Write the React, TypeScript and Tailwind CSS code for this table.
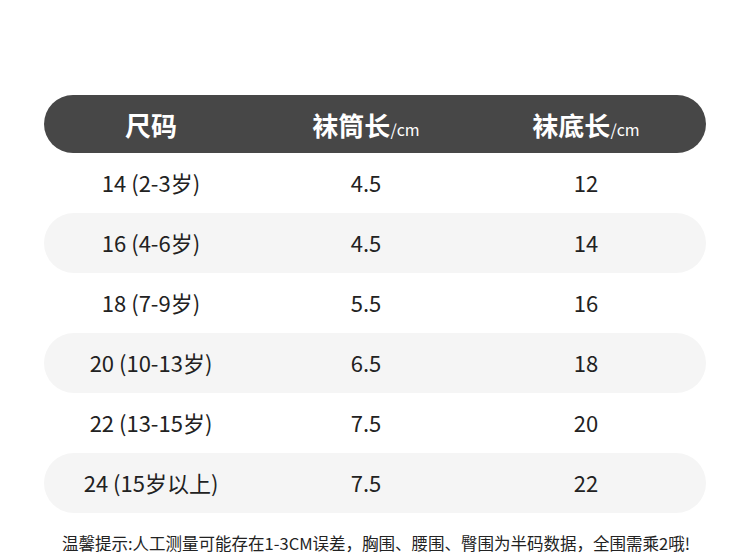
const rows = [
  { size: '14 (2-3岁)', tube: '4.5', sole: '12' },
  { size: '16 (4-6岁)', tube: '4.5', sole: '14' },
  { size: '18 (7-9岁)', tube: '5.5', sole: '16' },
  { size: '20 (10-13岁)', tube: '6.5', sole: '18' },
  { size: '22 (13-15岁)', tube: '7.5', sole: '20' },
  { size: '24 (15岁以上)', tube: '7.5', sole: '22' },
];

const App = () => {
  return (
    <div
      className="w-[750px] h-[553px] overflow-hidden bg-white pt-[95px]"
      style={{ fontFamily: '"Noto Sans CJK SC", "Noto Sans", sans-serif' }}
    >
      <div className="mx-[44px]">
        <div className="grid grid-cols-[214px_216px_1fr] pr-[8px] h-[58px] items-center rounded-full bg-[#474747] text-white">
          <div className="text-center text-[26px] font-bold">尺码</div>
          <div className="text-center text-[26px] font-bold">
            袜筒长<span className="text-[16px] font-normal">/cm</span>
          </div>
          <div className="text-center text-[26px] font-bold">
            袜底长<span className="text-[16px] font-normal">/cm</span>
          </div>
        </div>
        {rows.map((row, i) => (
          <div
            key={row.size}
            className={`grid grid-cols-[214px_216px_1fr] pr-[8px] pb-[2px] h-[60px] items-center rounded-full text-[22px] text-[#222] ${
              i % 2 === 1 ? 'bg-[#f5f5f5]' : 'bg-white'
            }`}
          >
            <div className="text-center">{row.size}</div>
            <div className="text-center">{row.tube}</div>
            <div className="text-center">{row.sole}</div>
          </div>
        ))}
      </div>
      <div className="mt-[21px] pl-[62px] text-[16.5px] leading-[18px] text-[#222] whitespace-nowrap">
        温馨提示:人工测量可能存在1-3CM误差，胸围、腰围、臀围为半码数据，全围需乘2哦!
      </div>
    </div>
  );
};

export default App;
